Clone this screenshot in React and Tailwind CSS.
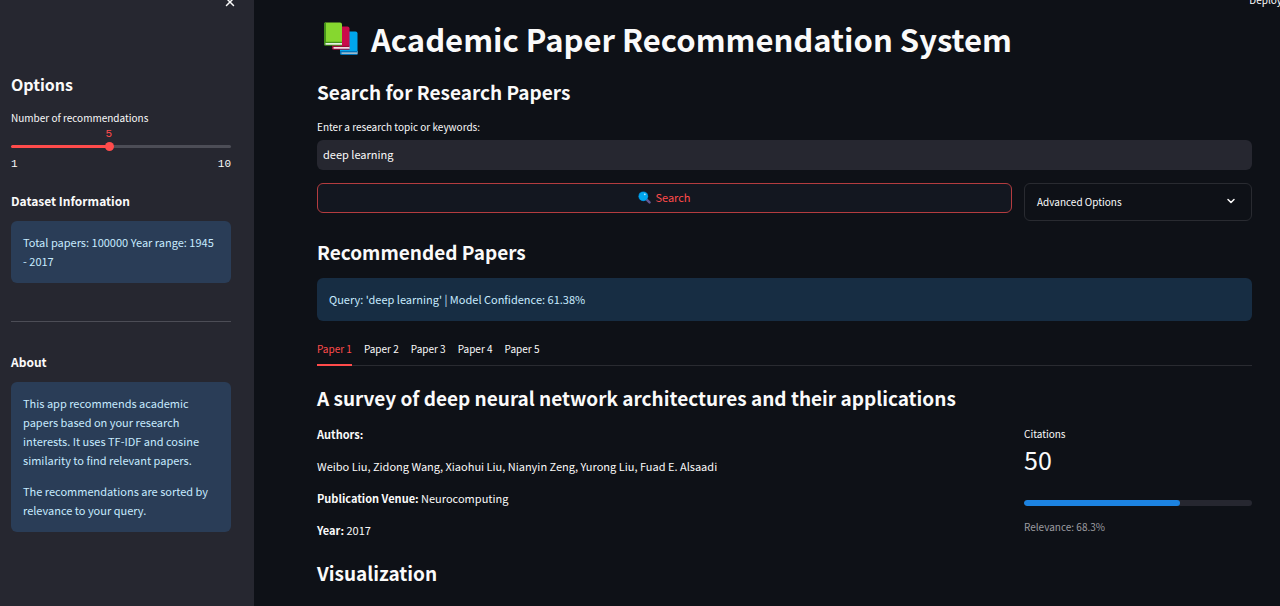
import { useState } from "react";
import { ChevronDown, X } from "lucide-react";

const papers = ["Paper 1", "Paper 2", "Paper 3", "Paper 4", "Paper 5"];
const RELEVANCE = 68.3;

function BooksIcon() {
  return (
    <svg viewBox="0 0 36 34" className="h-[34px] w-9 shrink-0" aria-hidden="true">
      <path d="M17 9.500h15.500a2 2 0 0 1 2 2v20H17z" fill="#00a6ed" />
      <path d="M17 29h17.500v3H18.500a1.500 1.500 0 0 1-1.500-1.500z" fill="#d3d3d3" />
      <path d="M17 29v2.500a1.500 1.500 0 0 0 1.500 1.500h16v-1.200H18.500v-1.300h16v-1.500z" fill="#0074ba" />
      <path d="M9 4.500h15.500a2 2 0 0 1 2 2V26H9z" fill="#ca0b4a" />
      <path d="M9 24h17.500v3H9z" fill="#f0dce4" />
      <path d="M9 23.700v2.500a1.500 1.500 0 0 0 1.500 1.500h16v-1H10.500v-1.700h16v-1.300z" fill="#990838" />
      <path d="M1 2a1.500 1.500 0 0 1 1.500-1.500H17a2 2 0 0 1 2 2V21H1z" fill="#86d72f" />
      <path d="M1 2A1.500 1.500 0 0 1 3 .5V20H1z" fill="#44911b" />
      <path d="M1 20h18v3H2.500A1.500 1.500 0 0 1 1 21.500z" fill="#e6f0e0" />
      <path d="M1 19.700v2.500a1.500 1.500 0 0 0 1.500 1.500H19v-1H2.500v-1.700H19v-1.300z" fill="#44911b" />
    </svg>
  );
}

function MagnifierIcon() {
  return (
    <svg viewBox="0 0 13 13" className="size-[13px] shrink-0" aria-hidden="true">
      <path d="M8.200 8.200l3.300 3.200" stroke="#635994" strokeWidth="2.400" strokeLinecap="round" />
      <circle cx="5.300" cy="5.300" r="4.900" fill="#0074ba" />
      <circle cx="5.300" cy="5.300" r="4.400" fill="#00a6ed" />
      <circle cx="6.800" cy="3.300" r="0.900" fill="#b8e6ff" />
    </svg>
  );
}

function Alert({ className, children }) {
  return (
    <div className={"rounded-md px-3 py-3 text-[11px] leading-[19px] text-[#c7ebff] " + className}>
      {children}
    </div>
  );
}

function Sidebar() {
  const [count, setCount] = useState(5);
  const percent = ((count - 1) / 9) * 100;
  return (
    <aside className="w-[254px] shrink-0 bg-[#262730] pr-[23px] pl-[11px]">
      <div className="-mr-1.5 flex h-1 items-center justify-end">
        <button type="button" aria-label="Close sidebar">
          <X className="size-3.5" strokeWidth={2.5} />
        </button>
      </div>
      <h2 className="mt-[68px] text-[16px] leading-6 font-bold">Options</h2>
      <label htmlFor="count" className="mt-[14px] block text-[10px] leading-4">
        Number of recommendations
      </label>
      <div className="relative mt-4">
        <output
          htmlFor="count"
          className="absolute -top-4 -translate-x-1/2 font-['Liberation_Mono',monospace] text-[11px] leading-4 text-[#ff4b4b]"
          style={{ left: `${percent}%` }}
        >
          {count}
        </output>
        <input
          id="count"
          type="range"
          min="1"
          max="10"
          value={count}
          onChange={(e) => setCount(Number(e.target.value))}
          className="block h-[9px] w-full appearance-none bg-transparent [&::-webkit-slider-runnable-track]:h-[3px] [&::-webkit-slider-runnable-track]:rounded-full [&::-webkit-slider-runnable-track]:bg-[linear-gradient(to_right,#ff4b4b_var(--fill),#4c4d56_var(--fill))] [&::-webkit-slider-thumb]:-mt-[3px] [&::-webkit-slider-thumb]:size-[9px] [&::-webkit-slider-thumb]:appearance-none [&::-webkit-slider-thumb]:rounded-full [&::-webkit-slider-thumb]:bg-[#ff4b4b]"
          style={{ "--fill": `${percent}%` }}
        />
      </div>
      <div className="mt-[5px] flex justify-between font-['Liberation_Mono',monospace] text-[11px] leading-4">
        <span>1</span>
        <span>10</span>
      </div>
      <h3 className="mt-[19px] text-[12px] leading-5 font-semibold">Dataset Information</h3>
      <Alert className="mt-[10px] bg-[#2a3d57]">Total papers: 100000 Year range: 1945 - 2017</Alert>
      <hr className="mt-[38px] border-[#4c4d56]" />
      <h3 className="mt-[30px] text-[12px] leading-5 font-semibold">About</h3>
      <Alert className="mt-[10px] bg-[#2a3d57]">
        <p>
          This app recommends academic papers based on your research interests. It uses TF-IDF and cosine similarity to
          find relevant papers.
        </p>
        <p className="mt-3">The recommendations are sorted by relevance to your query.</p>
      </Alert>
    </aside>
  );
}

export default function App() {
  const [query, setQuery] = useState("deep learning");
  const [active, setActive] = useState(0);
  return (
    <div className="relative flex min-h-screen overflow-hidden bg-[#0e1117] font-['Noto_Sans_CJK_SC',sans-serif] text-[11px] text-[#fafafa]">
      <Sidebar />
      <button type="button" className="absolute -top-2 -right-0.5 text-[10px] leading-4">
        Deploy
      </button>
      <main className="min-w-0 flex-1 pt-[19px] pr-7 pl-[63px]">
        <h1 className="flex items-center gap-3 pl-[6px] text-[31px] leading-10 font-bold">
          <BooksIcon />
          Academic Paper Recommendation System
        </h1>
        <h2 className="mt-[17px] text-[19px] leading-8 font-semibold">Search for Research Papers</h2>
        <label htmlFor="query" className="mt-[11px] block text-[10px] leading-4">
          Enter a research topic or keywords:
        </label>
        <input
          id="query"
          type="text"
          value={query}
          onChange={(e) => setQuery(e.target.value)}
          className="mt-[5px] block h-[30px] w-full rounded-md bg-[#262730] px-1.5 pb-0.5 text-[11px] outline-none"
        />
        <div className="mt-[13px] grid grid-cols-[695fr_228fr] items-start gap-3">
          <button
            type="button"
            className="flex h-[30px] items-center justify-center gap-1 rounded-md border border-[#b43c3f] bg-[#131720] pb-0.5 text-[#ff4b4b]"
          >
            <MagnifierIcon />
            Search
          </button>
          <button
            type="button"
            aria-expanded="false"
            className="flex h-[38px] items-center justify-between rounded-md border border-[#292b31] px-3 pb-0.5 text-[10px]"
          >
            Advanced Options
            <ChevronDown className="mr-0.5 size-3" strokeWidth={3} />
          </button>
        </div>
        <h2 className="mt-[15px] text-[19px] leading-8 font-semibold">Recommended Papers</h2>
        <Alert className="mt-[10px] bg-[#172d43]">Query: 'deep learning' | Model Confidence: 61.38%</Alert>
        <div role="tablist" className="mt-3 flex gap-3 border-b border-[#292b31]">
          {papers.map((name, i) => (
            <button
              key={name}
              type="button"
              role="tab"
              aria-selected={i === active}
              onClick={() => setActive(i)}
              className={
                i === active
                  ? "-mb-px border-b-2 border-[#ff4b4b] text-[10px] leading-[31px] text-[#ff4b4b]"
                  : "-mb-px border-b-2 border-transparent text-[10px] leading-[31px]"
              }
            >
              {name}
            </button>
          ))}
        </div>
        <h2 className="mt-4 text-[19px] leading-8 font-semibold">
          A survey of deep neural network architectures and their applications
        </h2>
        <div className="mt-[10px] grid grid-cols-[695fr_228fr] gap-3">
          <div className="flex flex-col gap-3 leading-5">
            <p>
              <strong className="font-semibold">Authors:</strong>
            </p>
            <p>Weibo Liu, Zidong Wang, Xiaohui Liu, Nianyin Zeng, Yurong Liu, Fuad E. Alsaadi</p>
            <p>
              <strong className="font-semibold">Publication Venue:</strong> Neurocomputing
            </p>
            <p>
              <strong className="font-semibold">Year:</strong> 2017
            </p>
          </div>
          <div>
            <p className="text-[10px] leading-5">Citations</p>
            <p className="text-[25px] leading-[30px]">50</p>
            <div
              role="progressbar"
              aria-label="Relevance"
              aria-valuenow={RELEVANCE}
              className="mt-[26px] h-1.5 overflow-hidden rounded-full bg-[#262730]"
            >
              <div className="h-full rounded-full bg-[#1c83e1]" style={{ width: `${RELEVANCE}%` }} />
            </div>
            <p className="mt-[11px] text-[10px] leading-5 text-[#9c9da1]">Relevance: 68.3%</p>
          </div>
        </div>
        <h2 className="mt-[17px] text-[19px] leading-8 font-semibold">Visualization</h2>
      </main>
    </div>
  );
}
